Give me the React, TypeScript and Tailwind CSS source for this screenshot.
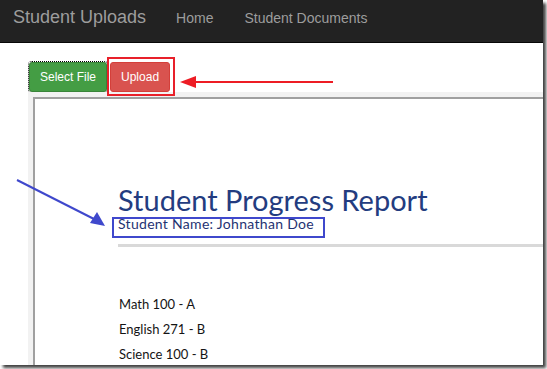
import React from "react";

export default function App() {
  const sans = { fontFamily: '"Liberation Sans", Arial, sans-serif' };
  const doc = { fontFamily: 'Lato, "Open Sans", sans-serif' };
  return (
    <div className="relative w-[547px] h-[369px] bg-white overflow-hidden">
      <div
        className="w-[543px] h-[365px] bg-white shadow-[3px_3px_3px_rgba(0,0,0,0.75)] overflow-hidden flex flex-col"
        style={sans}
      >
        <nav className="h-[43px] shrink-0 bg-[#222222] border-b border-[#080808] flex items-start">
          <span className="ml-[13px] mt-[7px] text-[18px] leading-[20px] text-[#9d9d9d]">Student Uploads</span>
          <span className="ml-[30px] mt-[8px] text-[14px] leading-[20px] text-[#9d9d9d]">Home</span>
          <span className="ml-[31px] mt-[8px] text-[14px] leading-[20px] text-[#9d9d9d]">Student Documents</span>
        </nav>
        <div className="flex items-start gap-[3px] ml-[29px] mt-[19px] shrink-0">
          <button className="h-[30px] px-[10px] text-[12px] leading-[18px] text-white bg-[#449d44] border border-[#398439] rounded-[3px] outline outline-1 outline-dotted outline-black">
            Select File
          </button>
          <button className="h-[30px] px-[10px] text-[12px] leading-[18px] text-white bg-[#d9534f] border border-[#d43f3a] rounded-[3px]">
            Upload
          </button>
        </div>
        <div className="ml-[28px] flex-1 bg-[#f2f2f2] pt-[5px] pl-[5px] min-h-0">
          <div className="h-full bg-white border-l-2 border-t-2 border-[#a0a0a0]" style={doc}>
            <div className="pl-[83px] pt-[85px]">
              <div className="text-[29px] leading-[32px] text-[#233c80]">Student Progress Report</div>
              <div className="text-[14px] leading-[16px] text-[#1f3372] tracking-[0.3px]">Student Name: Johnathan Doe</div>
            </div>
            <div className="ml-[83px] mt-[12px] h-[3px] bg-[#d9d9d9]" />
            <div className="pl-[84px] pt-[45px] text-[13px] leading-[25px] text-[#141414]">
              <div>Math 100 - A</div>
              <div>English 271 - B</div>
              <div>Science 100 - B</div>
            </div>
          </div>
        </div>
      </div>
      {/* annotation boxes */}
      <div className="absolute left-[107px] top-[57px] w-[68px] h-[39px] border-2 border-[#e8202a]" />
      <div className="absolute left-[112px] top-[217px] w-[213px] h-[21px] border-2 border-[#3f48cc]" />
      <svg className="absolute inset-0 pointer-events-none" width="547" height="369" viewBox="0 0 547 369">
        <line x1="333" y1="82" x2="192" y2="82" stroke="#ed1c24" strokeWidth="2" />
        <polygon points="180,82 196,76 196,88" fill="#ed1c24" />
        <line x1="17" y1="180" x2="94" y2="219" stroke="#3f48cc" strokeWidth="2" />
        <polygon points="105,226 90,223 97,212" fill="#3f48cc" />
      </svg>
    </div>
  );
}
